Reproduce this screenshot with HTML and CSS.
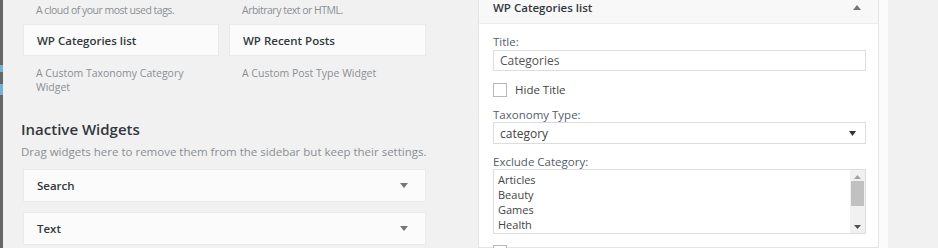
FILE: index.html
```html
<!DOCTYPE html>
<html lang="en">
<head>
    <meta charset="UTF-8">
    <title>Widgets</title>
    <link rel="stylesheet" href="styles.css">
</head>
<body>
    <div class="edge"></div>

    <div class="available">
        <div class="widget-grid">
            <div class="widget">
                <p class="widget-desc first">A cloud of your most used tags.</p>
            </div>
            <div class="widget">
                <p class="widget-desc first">Arbitrary text or HTML.</p>
            </div>
            <div class="widget">
                <div class="widget-title">WP Categories list</div>
                <p class="widget-desc">A Custom Taxonomy Category Widget</p>
            </div>
            <div class="widget">
                <div class="widget-title">WP Recent Posts</div>
                <p class="widget-desc">A Custom Post Type Widget</p>
            </div>
        </div>

        <div class="inactive">
            <h3>Inactive Widgets</h3>
            <p class="inactive-desc">Drag widgets here to remove them from the sidebar but keep their settings.</p>
            <div class="inactive-list">
                <div class="widget-bar">
                    <span>Search</span>
                    <svg class="arrow" width="8" height="5" viewBox="0 0 8 5"><path d="M0 0H8L4 5Z" fill="#72777c"/></svg>
                </div>
                <div class="widget-bar">
                    <span>Text</span>
                    <svg class="arrow" width="8" height="5" viewBox="0 0 8 5"><path d="M0 0H8L4 5Z" fill="#72777c"/></svg>
                </div>
            </div>
        </div>
    </div>

    <div class="sidebar">
        <div class="panel">
            <div class="panel-head">
                <span>WP Categories list</span>
                <svg class="arrow" width="8" height="5" viewBox="0 0 8 5"><path d="M0 5H8L4 0Z" fill="#72777c"/></svg>
            </div>
            <div class="panel-body">
                <label class="field-label">Title:</label>
                <input class="field" type="text" value="Categories">

                <div class="check-row">
                    <span class="checkbox"></span>
                    <span>Hide Title</span>
                </div>

                <label class="field-label">Taxonomy Type:</label>
                <div class="select">
                    <span>category</span>
                    <svg width="7" height="5" viewBox="0 0 7 5"><path d="M0 0H7L3.5 5Z" fill="#333"/></svg>
                </div>

                <label class="field-label">Exclude Category:</label>
                <div class="listbox">
                    <ul>
                        <li>Articles</li>
                        <li>Beauty</li>
                        <li>Games</li>
                        <li>Health</li>
                    </ul>
                    <div class="scrollbar">
                        <svg width="7" height="4" viewBox="0 0 7 4"><path d="M0 4H7L3.5 0Z" fill="#a3a3a3"/></svg>
                        <div class="thumb"></div>
                        <svg width="7" height="4" viewBox="0 0 7 4"><path d="M0 0H7L3.5 4Z" fill="#505050"/></svg>
                    </div>
                </div>

                <div class="check-row">
                    <span class="checkbox"></span>
                </div>
            </div>
        </div>
        <div class="strip"></div>
    </div>
</body>
</html>
```

FILE: styles.css
```css
body {
    margin: 0;
    height: 248px;
    overflow: hidden;
    display: flex;
    background: #f1f1f1;
    font-family: "Open Sans", "Liberation Sans", sans-serif;
    color: #23282d;
}

.edge {
    width: 3px;
    flex: none;
    background: linear-gradient(#666 0, #666 65px, #6fb3d6 65px, #6fb3d6 72px, #666 72px, #666 84px, #6fb3d6 84px, #6fb3d6 95px, #666 95px);
}

.available {
    width: 467px;
    flex: none;
}

.widget-grid {
    display: grid;
    grid-template-columns: 196px 197px;
    column-gap: 10px;
    padding-left: 20px;
}

.widget-title {
    height: 32px;
    line-height: 32px;
    padding-left: 13px;
    background: #fbfbfb;
    border: 1px solid #ebebeb;
    box-sizing: border-box;
    font-size: 11.5px;
    font-weight: 600;
    color: #32373c;
}

.widget-desc {
    margin: 10px 0 0;
    padding: 0 13px;
    font-size: 10.5px;
    line-height: 14px;
    color: #8a8f94;
}

.widget-desc.first {
    margin: 3px 0 7px;
    letter-spacing: -0.5px;
}

.inactive {
    padding-left: 18px;
    margin-top: 26px;
}

.inactive h3 {
    margin: 0;
    font-size: 15px;
    font-weight: 600;
    line-height: 18px;
    color: #32373c;
}

.inactive-desc {
    margin: 7px 0 0;
    font-size: 11.5px;
    line-height: 14px;
    color: #8a8f94;
}

.inactive-list {
    margin: 10px 0 0 2px;
    width: 403px;
}

.widget-bar {
    height: 33px;
    display: flex;
    align-items: center;
    justify-content: space-between;
    padding: 0 17px 0 13px;
    margin-bottom: 10px;
    background: #fbfbfb;
    border: 1px solid #ebebeb;
    box-sizing: border-box;
    font-size: 11.5px;
    font-weight: 600;
    color: #32373c;
}

.sidebar {
    display: flex;
    flex: 1;
    padding-left: 8px;
}

.panel {
    width: 401px;
    flex: none;
    background: #fff;
    border: 1px solid #e5e5e5;
    border-top: none;
    box-sizing: border-box;
}

.strip {
    width: 9px;
    flex: none;
    background: #fbfbfb;
}

.panel-head {
    height: 24px;
    display: flex;
    justify-content: space-between;
    padding: 0 17px 8px 14px;
    align-items: center;
    box-sizing: border-box;
    background: #f8f8f8;
    border-bottom: 1px solid #eeeeee;
    font-size: 11.5px;
    font-weight: 600;
    color: #32373c;
}

.panel-body {
    padding: 11px 12px 0 14px;
}

.field-label {
    display: block;
    font-size: 11.5px;
    line-height: 14px;
    color: #555d66;
}

.field {
    display: block;
    width: 100%;
    height: 21px;
    margin: 1px 0 0;
    padding: 0 6px;
    box-sizing: border-box;
    border: 1px solid #dddddd;
    font-family: inherit;
    font-size: 12px;
    color: #555;
    outline: none;
}

.check-row {
    display: flex;
    align-items: center;
    gap: 8px;
    margin: 11px 0 11px;
    font-size: 11.5px;
    color: #444;
}

.checkbox {
    width: 14px;
    height: 14px;
    box-sizing: border-box;
    border: 1px solid #b4b9be;
    background: #fff;
}

.select {
    height: 22px;
    display: flex;
    align-items: center;
    justify-content: space-between;
    padding: 0 9px 0 6px;
    box-sizing: border-box;
    border: 1px solid #dddddd;
    font-size: 12px;
    color: #444;
    margin-bottom: 11px;
}

.listbox {
    height: 65px;
    display: flex;
    border: 1px solid #dddddd;
    box-sizing: border-box;
}

.listbox ul {
    flex: 1;
    margin: 0;
    padding: 2px 4px;
    list-style: none;
    font-size: 11px;
    line-height: 15px;
    color: #444;
}

.scrollbar {
    width: 15px;
    display: flex;
    flex-direction: column;
    align-items: center;
    justify-content: space-between;
    padding: 5px 0 4px;
    box-sizing: border-box;
    background: #f1f1f1;
}

.thumb {
    width: 13px;
    height: 25px;
    background: #c1c1c1;
    margin-bottom: 17px;
}
```
